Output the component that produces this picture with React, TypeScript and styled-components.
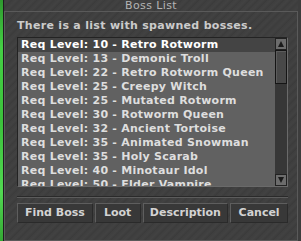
import React from 'react';
import styled, { createGlobalStyle } from 'styled-components';

const GlobalStyle = createGlobalStyle`
  html, body {
    margin: 0;
    padding: 0;
    background: #3b3b3b;
    overflow: hidden;
  }
`;

const Page = styled.div`
  display: flex;
  width: 301px;
  height: 241px;
  background: #3d3d3d;
  font-family: "DejaVu Sans", Verdana, sans-serif;
`;

const GreenStrip = styled.div`
  width: 3px;
  background: linear-gradient(180deg, #2f9a2f 0%, #45d045 20%, #3cc23c 50%, #52d852 80%, #34a834 100%);
`;

const Window = styled.div`
  width: 294px;
  display: flex;
  flex-direction: column;
  border-left: 1px solid #1e1e1e;
  background: repeating-linear-gradient(135deg, #3e3e3e 0px, #424242 3px, #3b3b3b 6px);
`;

const TitleBar = styled.div`
  height: 12px;
  line-height: 11px;
  text-align: center;
  font-size: 11px;
  color: #b4b4b4;
  letter-spacing: 0.4px;
`;

const Panel = styled.div`
  height: 225px;
  border: 1px solid #5a5a5a;
  padding: 7px 9px 14px 12px;
  display: flex;
  flex-direction: column;
`;

const Subtitle = styled.div`
  height: 14px;
  line-height: 14px;
  font-size: 11px;
  font-weight: bold;
  letter-spacing: 0.3px;
  color: #cbcbcb;
  margin-bottom: 4px;
  white-space: nowrap;
`;

const ListBox = styled.div`
  display: flex;
  height: 148px;
  border: 1px solid #232323;
  border-right-color: #6a6a6a;
  border-bottom-color: #6a6a6a;
  background: #616161;
  overflow: hidden;
`;

const Rows = styled.div`
  flex: 1;
  overflow: hidden;
`;

const Row = styled.div<{ $selected?: boolean }>`
  height: 14px;
  line-height: 14px;
  padding-left: 3px;
  font-size: 11px;
  font-weight: bold;
  letter-spacing: 0.25px;
  white-space: nowrap;
  color: ${p => (p.$selected ? '#ffffff' : '#dedede')};
  background: ${p => (p.$selected ? '#444444' : 'transparent')};
`;

const ScrollBar = styled.div`
  width: 12px;
  display: flex;
  flex-direction: column;
  background: #373737;
`;

const ArrowButton = styled.div`
  height: 12px;
  display: flex;
  align-items: center;
  justify-content: center;
  background: #6c6c6c;
  border: 1px solid #222;
  box-sizing: border-box;
`;

const Thumb = styled.div`
  height: 34px;
  background: #484848;
  border: 1px solid #151515;
  box-sizing: border-box;
  box-shadow: inset 1px 1px 0 #5c5c5c;
`;

const Track = styled.div`
  flex: 1;
  background: #373737;
`;

const Separator = styled.div`
  margin-top: 9px;
  height: 1px;
  border-top: 1px solid #2a2a2a;
  background: #5c5c5c;
`;

const ButtonRow = styled.div`
  margin-top: 5px;
  display: flex;
  gap: 2px;
`;

const Button = styled.div<{ $w: number }>`
  width: ${p => p.$w}px;
  height: 20px;
  box-sizing: border-box;
  border: 1px solid #5e5e5e;
  border-right-color: #2a2a2a;
  border-bottom-color: #2a2a2a;
  background: #383838;
  color: #d3d3d3;
  font-size: 11px;
  font-weight: bold;
  line-height: 18px;
  text-align: center;
`;

const bosses = [
  'Req Level: 10 - Retro Rotworm',
  'Req Level: 13 - Demonic Troll',
  'Req Level: 22 - Retro Rotworm Queen',
  'Req Level: 25 - Creepy Witch',
  'Req Level: 25 - Mutated Rotworm',
  'Req Level: 30 - Rotworm Queen',
  'Req Level: 32 - Ancient Tortoise',
  'Req Level: 35 - Animated Snowman',
  'Req Level: 35 - Holy Scarab',
  'Req Level: 40 - Minotaur Idol',
  'Req Level: 50 - Elder Vampire',
];

const Arrow = ({ up }: { up?: boolean }) => (
  <svg width="8" height="8" viewBox="0 0 8 8">
    <path d={up ? 'M4 1 L7 7 L1 7 Z' : 'M1 1 L7 1 L4 7 Z'} fill="#1a1a1a" />
  </svg>
);

export default function App() {
  return (
    <>
      <GlobalStyle />
      <Page>
        <GreenStrip />
        <Window>
          <TitleBar>Boss List</TitleBar>
          <Panel>
            <Subtitle>There is a list with spawned bosses.</Subtitle>
            <ListBox>
              <Rows>
                {bosses.map((b, i) => (
                  <Row key={b} $selected={i === 0}>{b}</Row>
                ))}
              </Rows>
              <ScrollBar>
                <ArrowButton><Arrow up /></ArrowButton>
                <Thumb />
                <Track />
                <ArrowButton><Arrow /></ArrowButton>
              </ScrollBar>
            </ListBox>
            <Separator />
            <ButtonRow>
              <Button $w={76}>Find Boss</Button>
              <Button $w={46}>Loot</Button>
              <Button $w={86}>Description</Button>
              <Button $w={58}>Cancel</Button>
            </ButtonRow>
          </Panel>
        </Window>
      </Page>
    </>
  );
}
